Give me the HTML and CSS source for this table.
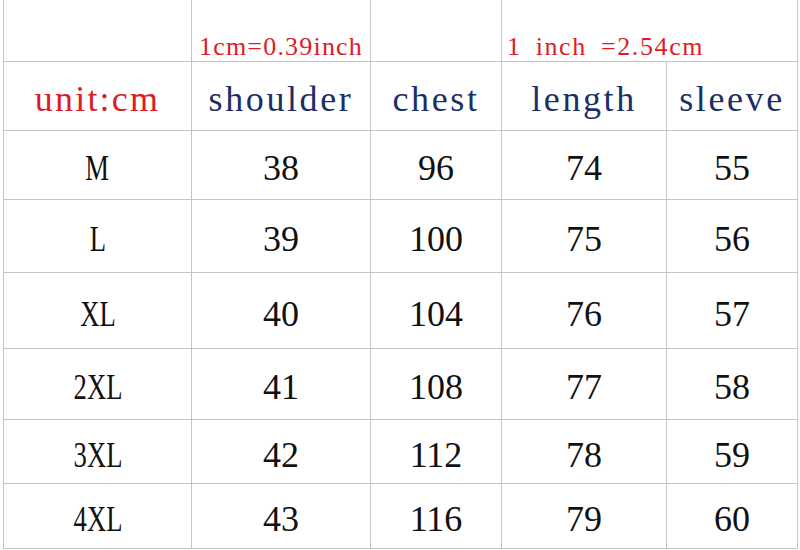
FILE: index.html
```html
<!DOCTYPE html>
<html>
<head>
<meta charset="utf-8">
<link rel="stylesheet" href="styles.css">
</head>
<body>
<div class="sheet">
  <div class="cell top"></div>
  <div class="cell top center-note"><span class="note">1cm=0.39inch</span></div>
  <div class="cell top"></div>
  <div class="cell top span2 left-note"><span class="note wide">1 inch =2.54cm</span></div>

  <div class="cell head unit">unit:cm</div>
  <div class="cell head">shoulder</div>
  <div class="cell head">chest</div>
  <div class="cell head">length</div>
  <div class="cell head">sleeve</div>

  <div class="cell num"><span class="size">M</span></div><div class="cell num">38</div><div class="cell num">96</div><div class="cell num">74</div><div class="cell num">55</div>
  <div class="cell num"><span class="size">L</span></div><div class="cell num">39</div><div class="cell num">100</div><div class="cell num">75</div><div class="cell num">56</div>
  <div class="cell num"><span class="size">XL</span></div><div class="cell num">40</div><div class="cell num">104</div><div class="cell num">76</div><div class="cell num">57</div>
  <div class="cell num"><span class="size">2XL</span></div><div class="cell num">41</div><div class="cell num">108</div><div class="cell num">77</div><div class="cell num">58</div>
  <div class="cell num"><span class="size">3XL</span></div><div class="cell num">42</div><div class="cell num">112</div><div class="cell num">78</div><div class="cell num">59</div>
  <div class="cell num"><span class="size">4XL</span></div><div class="cell num">43</div><div class="cell num">116</div><div class="cell num">79</div><div class="cell num">60</div>
</div>
</body>
</html>
```
FILE: styles.css
```css
html, body {
  margin: 0;
  padding: 0;
  background: #ffffff;
}
body {
  width: 800px;
  height: 550px;
  overflow: hidden;
  font-family: "Liberation Serif", serif;
}
.sheet {
  margin-left: 3px;
  width: 795px;
  display: grid;
  grid-template-columns: 187px 178px 130px 164px 130px;
  grid-template-rows: 61px 68px 68px 72px 75px 70px 63px 64px;
  gap: 1px;
  background: #c4c4c4;
  border-left: 1px solid #c4c4c4;
  border-right: 1px solid #c4c4c4;
  border-bottom: 1px solid #c4c4c4;
  box-sizing: border-box;
}
.cell {
  background: #ffffff;
  display: flex;
  align-items: center;
  justify-content: center;
  font-family: "Liberation Serif", serif;
  color: #111111;
  white-space: nowrap;
}
.span2 {
  grid-column: span 2;
}
.top {
  align-items: flex-end;
}
.center-note {
  justify-content: center;
}
.left-note {
  justify-content: flex-start;
  padding-left: 5px;
}
.note {
  font-family: "Liberation Serif", serif;
  font-size: 26px;
  line-height: 26px;
  color: #dc1c26;
  letter-spacing: 1.2px;
  padding-bottom: 1px;
}
.note.wide {
  letter-spacing: 1.6px;
  word-spacing: 6px;
}
.head {
  font-size: 36px;
  letter-spacing: 2.6px;
  color: #1b2f66;
  padding-top: 6px;
}
.head.unit {
  color: #dc1c26;
  letter-spacing: 2.2px;
}
.num {
  font-size: 36px;
  padding-top: 6px;
}
.size {
  display: inline-block;
  transform: scaleX(0.74);
}
```
